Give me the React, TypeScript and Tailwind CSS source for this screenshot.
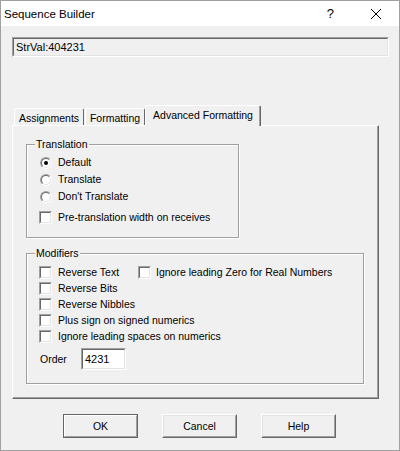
import React from "react";

function Radio({ checked }: { checked?: boolean }) {
  return (
    <div className="w-[12px] h-[12px] rounded-full border border-t-[#a0a0a0] border-l-[#a0a0a0] border-b-white border-r-white flex">
      <div className="flex-1 rounded-full border border-t-[#696969] border-l-[#696969] border-b-[#e3e3e3] border-r-[#e3e3e3] bg-white flex items-center justify-center">
        {checked && <div className="w-[4px] h-[4px] rounded-full bg-black" />}
      </div>
    </div>
  );
}

function Check() {
  return (
    <div className="w-[13px] h-[13px] shrink-0 border border-t-[#a0a0a0] border-l-[#a0a0a0] border-b-white border-r-white flex">
      <div className="flex-1 border border-t-[#696969] border-l-[#696969] border-b-[#e3e3e3] border-r-[#e3e3e3] bg-white" />
    </div>
  );
}

function Button({ label, def }: { label: string; def?: boolean }) {
  if (def) {
    return (
      <div className="w-[75px] h-[24px] flex border border-[#646464]">
        <div className="flex-1 flex border border-t-white border-l-white border-b-[#a0a0a0] border-r-[#a0a0a0]">
          <div className="flex-1 flex items-center justify-center bg-[#f0f0f0]">{label}</div>
        </div>
      </div>
    );
  }
  return (
    <div className="w-[75px] h-[24px] flex">
      <div className="flex-1 flex border border-t-white border-l-white border-b-[#696969] border-r-[#696969]">
        <div className="flex-1 flex items-center justify-center border border-t-[#e3e3e3] border-l-[#e3e3e3] border-b-[#a0a0a0] border-r-[#a0a0a0] bg-[#f0f0f0]">
          {label}
        </div>
      </div>
    </div>
  );
}

function GroupBox({
  title,
  className,
  children,
}: {
  title: string;
  className: string;
  children: React.ReactNode;
}) {
  return (
    <div className={"relative border border-[#a0a0a0] shadow-[1px_1px_0_0_#ffffff,inset_1px_1px_0_0_#ffffff] " + className}>
      <div className="absolute left-[8px] top-[-7px] bg-[#f0f0f0] px-[1px] leading-[13px]">{title}</div>
      {children}
    </div>
  );
}

export default function App() {
  return (
    <div className="w-[400px] h-[451px] border border-[#a0a0a0] bg-[#f0f0f0] flex flex-col font-['Liberation_Sans',Arial,sans-serif] text-[10.5px] text-[#000] leading-[13px]">
      {/* Title bar */}
      <div className="h-[25px] bg-white flex items-center pl-[3px] shrink-0">
        <span className="text-[11.5px] leading-[14px]">Sequence Builder</span>
        <span className="ml-auto text-[13px] leading-[14px] mr-[36px]">?</span>
        <svg width="12" height="12" viewBox="0 0 12 12" className="mr-[17px]">
          <path d="M1 1 L11 11 M11 1 L1 11" stroke="#000" strokeWidth="1" />
        </svg>
      </div>

      {/* Content */}
      <div className="flex-1 flex flex-col pl-[11px] pt-[11px]">
        {/* read-only text field */}
        <div className="w-[377px] h-[20px] flex border border-t-[#a0a0a0] border-l-[#a0a0a0] border-b-white border-r-white">
          <div className="flex-1 flex items-center pl-[2px] border border-t-[#696969] border-l-[#696969] border-b-[#e3e3e3] border-r-[#e3e3e3] bg-[#f0f0f0] text-[11px]">
            StrVal:404231
          </div>
        </div>

        {/* Tabs */}
        <div className="mt-[49px] flex flex-col w-[367px]">
          <div className="flex items-end h-[19px] pl-[2px]">
            <div className="w-[70px] h-[17px] flex items-center justify-center border-t border-l border-r border-t-white border-l-white border-r-[#696969] rounded-t-[2px] pt-[2px]">
              Assignments
            </div>
            <div className="w-[60px] h-[17px] ml-px flex items-center justify-center border-t border-l border-r border-t-white border-l-white border-r-[#696969] rounded-t-[2px] pt-[2px]">
              Formatting
            </div>
            <div className="relative z-10 w-[116px] h-[21px] -mb-[1px] bg-[#f0f0f0] flex items-start justify-center pt-[3px] border-t border-l border-r border-t-white border-l-white border-r-[#696969] rounded-t-[2px] shadow-[inset_-1px_0_0_0_#a0a0a0]">
              Advanced Formatting
            </div>
          </div>

          {/* Panel */}
          <div className="h-[274px] border border-t-white border-l-white border-r-[#696969] border-b-[#696969] shadow-[inset_-1px_-1px_0_0_#a0a0a0] pl-[13px] pt-[18px] flex flex-col">
            <GroupBox title="Translation" className="w-[213px] h-[94px] flex flex-col pl-[12px] pt-[9px]">
              <div className="h-[17px] flex items-center">
                <div className="ml-px"><Radio checked /></div>
                <span className="ml-[6px]">Default</span>
              </div>
              <div className="h-[17px] flex items-center">
                <div className="ml-px"><Radio /></div>
                <span className="ml-[6px]">Translate</span>
              </div>
              <div className="h-[17px] flex items-center">
                <div className="ml-px"><Radio /></div>
                <span className="ml-[6px]">Don't Translate</span>
              </div>
              <div className="h-[17px] mt-[4px] flex items-center">
                <Check />
                <span className="ml-[6px]">Pre-translation width on receives</span>
              </div>
            </GroupBox>

            <GroupBox title="Modifiers" className="mt-[15px] w-[338px] h-[131px] flex flex-col pl-[12px] pt-[10px]">
              <div className="h-[16px] flex items-center">
                <div className="w-[99px] flex items-center">
                  <Check />
                  <span className="ml-[6px]">Reverse Text</span>
                </div>
                <Check />
                <span className="ml-[5px]">Ignore leading Zero for Real Numbers</span>
              </div>
              <div className="h-[16px] flex items-center">
                <Check />
                <span className="ml-[6px]">Reverse Bits</span>
              </div>
              <div className="h-[16px] flex items-center">
                <Check />
                <span className="ml-[6px]">Reverse Nibbles</span>
              </div>
              <div className="h-[16px] flex items-center">
                <Check />
                <span className="ml-[6px]">Plus sign on signed numerics</span>
              </div>
              <div className="h-[16px] flex items-center">
                <Check />
                <span className="ml-[6px]">Ignore leading spaces on numerics</span>
              </div>
              <div className="mt-[4px] h-[22px] flex items-center">
                <span className="ml-px w-[41px]">Order</span>
                <div className="w-[45px] h-[22px] flex border border-t-[#a0a0a0] border-l-[#a0a0a0] border-b-white border-r-white">
                  <div className="flex-1 flex items-center pl-[2px] border border-t-[#696969] border-l-[#696969] border-b-[#e3e3e3] border-r-[#e3e3e3] bg-white text-[11px]">
                    4231
                  </div>
                </div>
              </div>
            </GroupBox>
          </div>
        </div>

        {/* Buttons */}
        <div className="mt-[15px] flex gap-[24px] pl-[51px]">
          <Button label="OK" def />
          <Button label="Cancel" />
          <Button label="Help" />
        </div>
      </div>
    </div>
  );
}
